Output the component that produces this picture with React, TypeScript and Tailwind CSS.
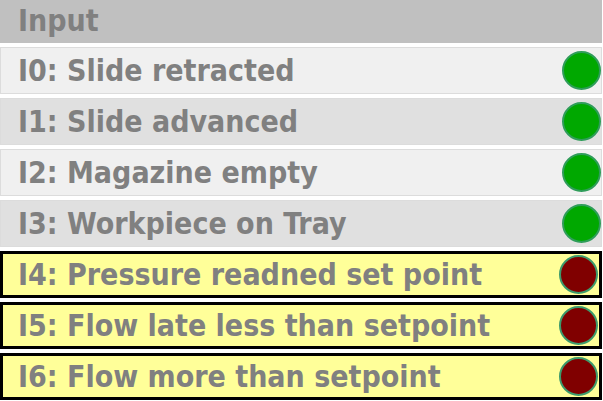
const inputs = [
    { label: "I0: Slide retracted", on: true, bg: "bg-[#f0f0f0]" },
    { label: "I1: Slide advanced", on: true, bg: "bg-[#e0e0e0]" },
    { label: "I2: Magazine empty", on: true, bg: "bg-[#f0f0f0]" },
    { label: "I3: Workpiece on Tray", on: true, bg: "bg-[#e0e0e0]" },
    { label: "I4: Pressure readned set point", on: false },
    { label: "I5: Flow late less than setpoint", on: false },
    { label: "I6: Flow more than setpoint", on: false },
];

function Lamp({ on }: { on: boolean }) {
    return on ? (
        <div className="h-[39px] w-[39px] shrink-0 rounded-full border-2 border-[#2f9d5a] bg-[#00a800]" />
    ) : (
        <div className="h-[39px] w-[39px] shrink-0 rounded-full border-2 border-[#3d9a6c] bg-[#800000]" />
    );
}

export default function App() {
    return (
        <div className="flex w-[602px] flex-col gap-[4px] bg-white font-['DejaVu_Sans_Condensed','DejaVu_Sans',sans-serif] text-[30px] font-bold leading-none text-[#808080]">
            <div className="flex h-[43px] items-center bg-[#c0c0c0] pl-[18px] pb-[2px]">Input</div>
            {inputs.map((item) =>
                item.on ? (
                    <div
                        key={item.label}
                        className={`flex h-[47px] items-center justify-between border border-[#dcdcdc] pl-[17px] ${item.bg}`}
                    >
                        <span>{item.label}</span>
                        <Lamp on />
                    </div>
                ) : (
                    <div
                        key={item.label}
                        className="flex h-[47px] items-center justify-between border-[3px] border-black bg-[#ffff99] pl-[15px] pr-[1px]"
                    >
                        <span>{item.label}</span>
                        <Lamp on={false} />
                    </div>
                )
            )}
        </div>
    );
}
